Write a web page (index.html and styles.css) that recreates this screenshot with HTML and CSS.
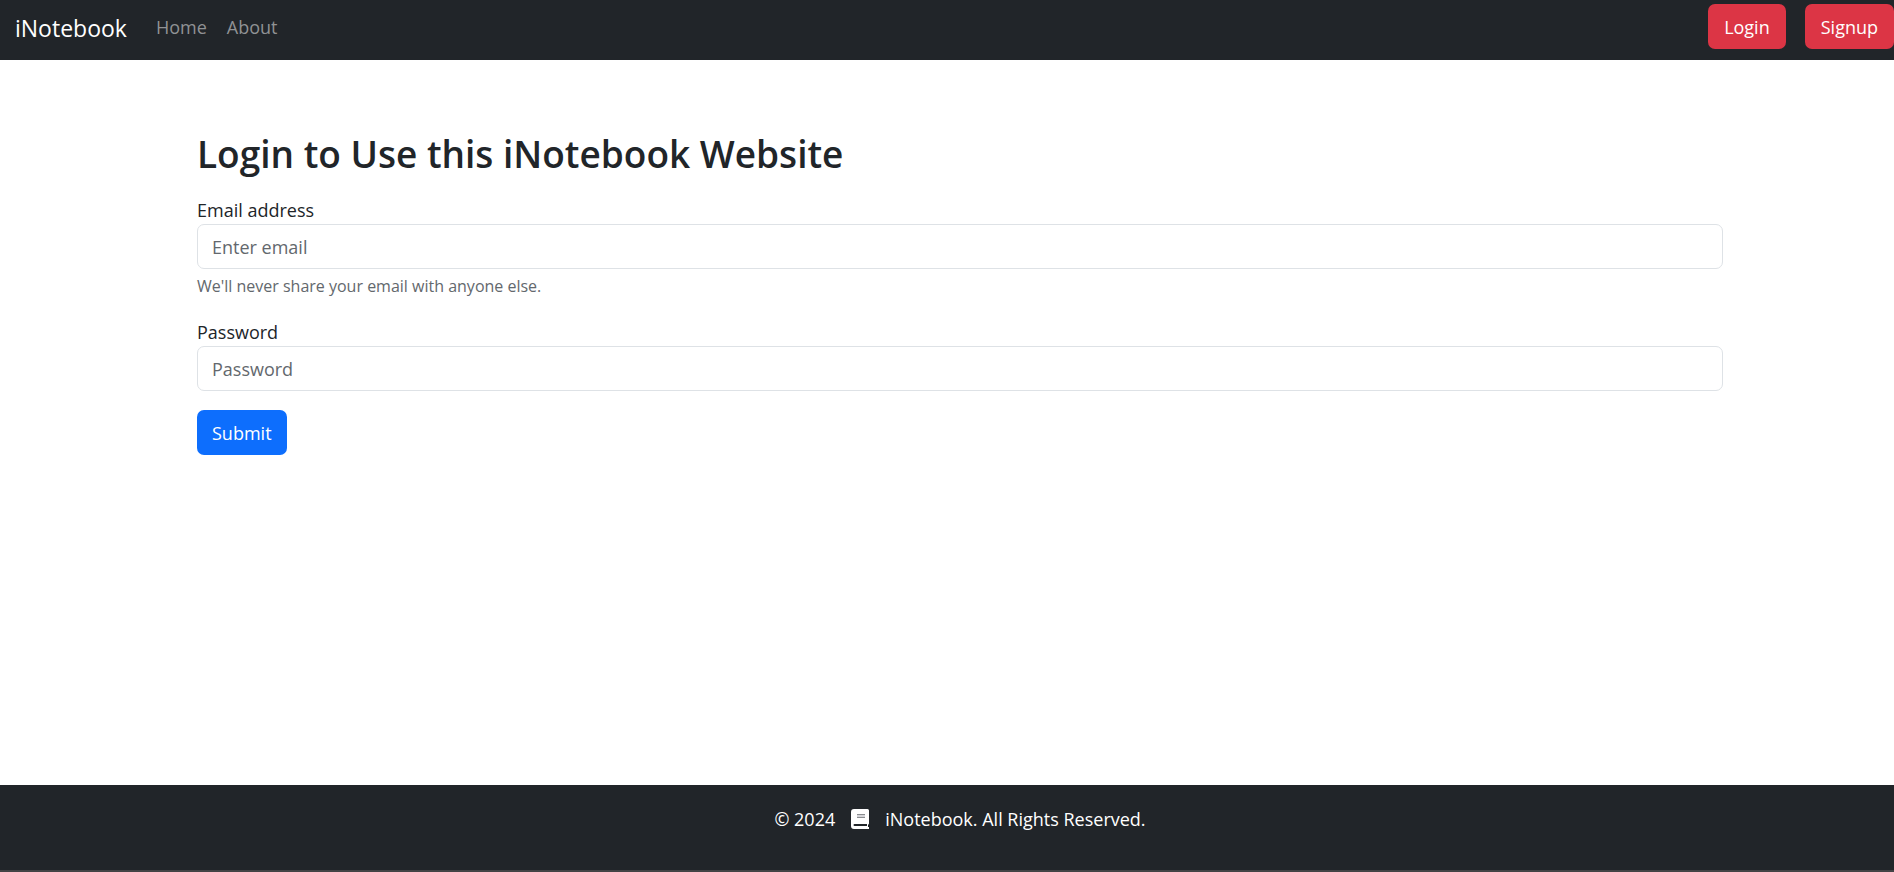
FILE: index.html
```html
<!DOCTYPE html>
<html lang="en">
<head>
  <meta charset="utf-8">
  <title>iNotebook</title>
  <link rel="stylesheet" href="styles.css">
</head>
<body>
  <nav class="navbar">
    <a class="brand" href="#">iNotebook</a>
    <div class="nav-links">
      <a href="#">Home</a>
      <a href="#">About</a>
    </div>
    <div class="nav-actions">
      <a class="btn btn-danger" href="#">Login</a>
      <a class="btn btn-danger" href="#">Signup</a>
    </div>
  </nav>

  <main class="container">
    <h1 class="title">Login to Use this iNotebook Website</h1>
    <form>
      <div class="group">
        <label for="email">Email address</label>
        <input class="control" type="email" id="email" placeholder="Enter email">
        <small class="help">We'll never share your email with anyone else.</small>
      </div>
      <div class="group">
        <label for="password">Password</label>
        <input class="control" type="password" id="password" placeholder="Password">
      </div>
      <button class="btn btn-primary" type="submit">Submit</button>
    </form>
  </main>

  <footer class="footer">
    <span>© 2024</span>
    <svg class="book" viewBox="0 0 18 20" aria-hidden="true">
      <path fill="#fff" d="M3 0H16.500Q18 0 18 1.500V14.500Q18 15.500 17 15.800V18H18V20H3Q0 20 0 17V3Q0 0 3 0Z"/>
      <path fill="#212529" d="M3.500 15H16V17H3.500Q2.500 17 2.500 16T3.500 15Z"/>
      <path fill="#8b8d90" d="M6 5H14V6H6ZM6 8H14V9H6Z"/>
      <path fill="#d5d5d9" d="M6 6H14V8H6Z"/>
    </svg>
    <span>iNotebook. All Rights Reserved.</span>
  </footer>
</body>
</html>
```
FILE: styles.css
```css
* {
  box-sizing: border-box;
}

body {
  margin: 0;
  min-height: 100vh;
  display: flex;
  flex-direction: column;
  font-family: "Open Sans", "Noto Sans", sans-serif;
  font-size: 18px;
  line-height: 28px;
  color: #212529;
  background: #fff;
}

a {
  text-decoration: none;
}

.navbar {
  display: flex;
  align-items: flex-start;
  height: 60px;
  padding: 4px 0 0 15px;
  background: #212529;
}

.brand {
  padding-top: 10px;
  font-size: 23px;
  color: #fff;
}

.nav-links {
  display: flex;
  gap: 20px;
  margin-left: 29px;
  padding-top: 9px;
}

.nav-links a {
  color: #909294;
}

.nav-actions {
  display: flex;
  gap: 19px;
  margin-left: auto;
}

.btn {
  display: inline-block;
  padding: 9px 15px 8px;
  border: 0;
  border-radius: 7px;
  font: inherit;
  line-height: 28px;
  color: #fff;
  cursor: pointer;
}

.btn-danger {
  padding-left: 16px;
  padding-right: 16px;
  background: #dc3545;
}

.btn-primary {
  background: #0d6efd;
}

.container {
  flex: 1;
  padding: 70px 171px 0 197px;
}

.title {
  margin: 0 0 18px;
  font-size: 37px;
  line-height: 48px;
  font-weight: 600;
}

.group {
  display: flex;
  flex-direction: column;
  margin-bottom: 19px;
}

.control {
  width: 100%;
  height: 45px;
  padding: 0 14px;
  border: 1px solid #dee2e6;
  border-radius: 7px;
  font: inherit;
  color: inherit;
  background: #fff;
}

.control::placeholder {
  color: #63686d;
  opacity: 1;
}

.help {
  margin-top: 4px;
  font-size: 16px;
  line-height: 26px;
  color: #63686d;
}

.footer {
  display: flex;
  justify-content: center;
  height: 87px;
  padding: 20px 0 0 26px;
  border-bottom: 2px solid #434345;
  color: #fff;
  background: #212529;
}

.book {
  width: 18px;
  height: 20px;
  margin: 4px 16px 0;
}
```
